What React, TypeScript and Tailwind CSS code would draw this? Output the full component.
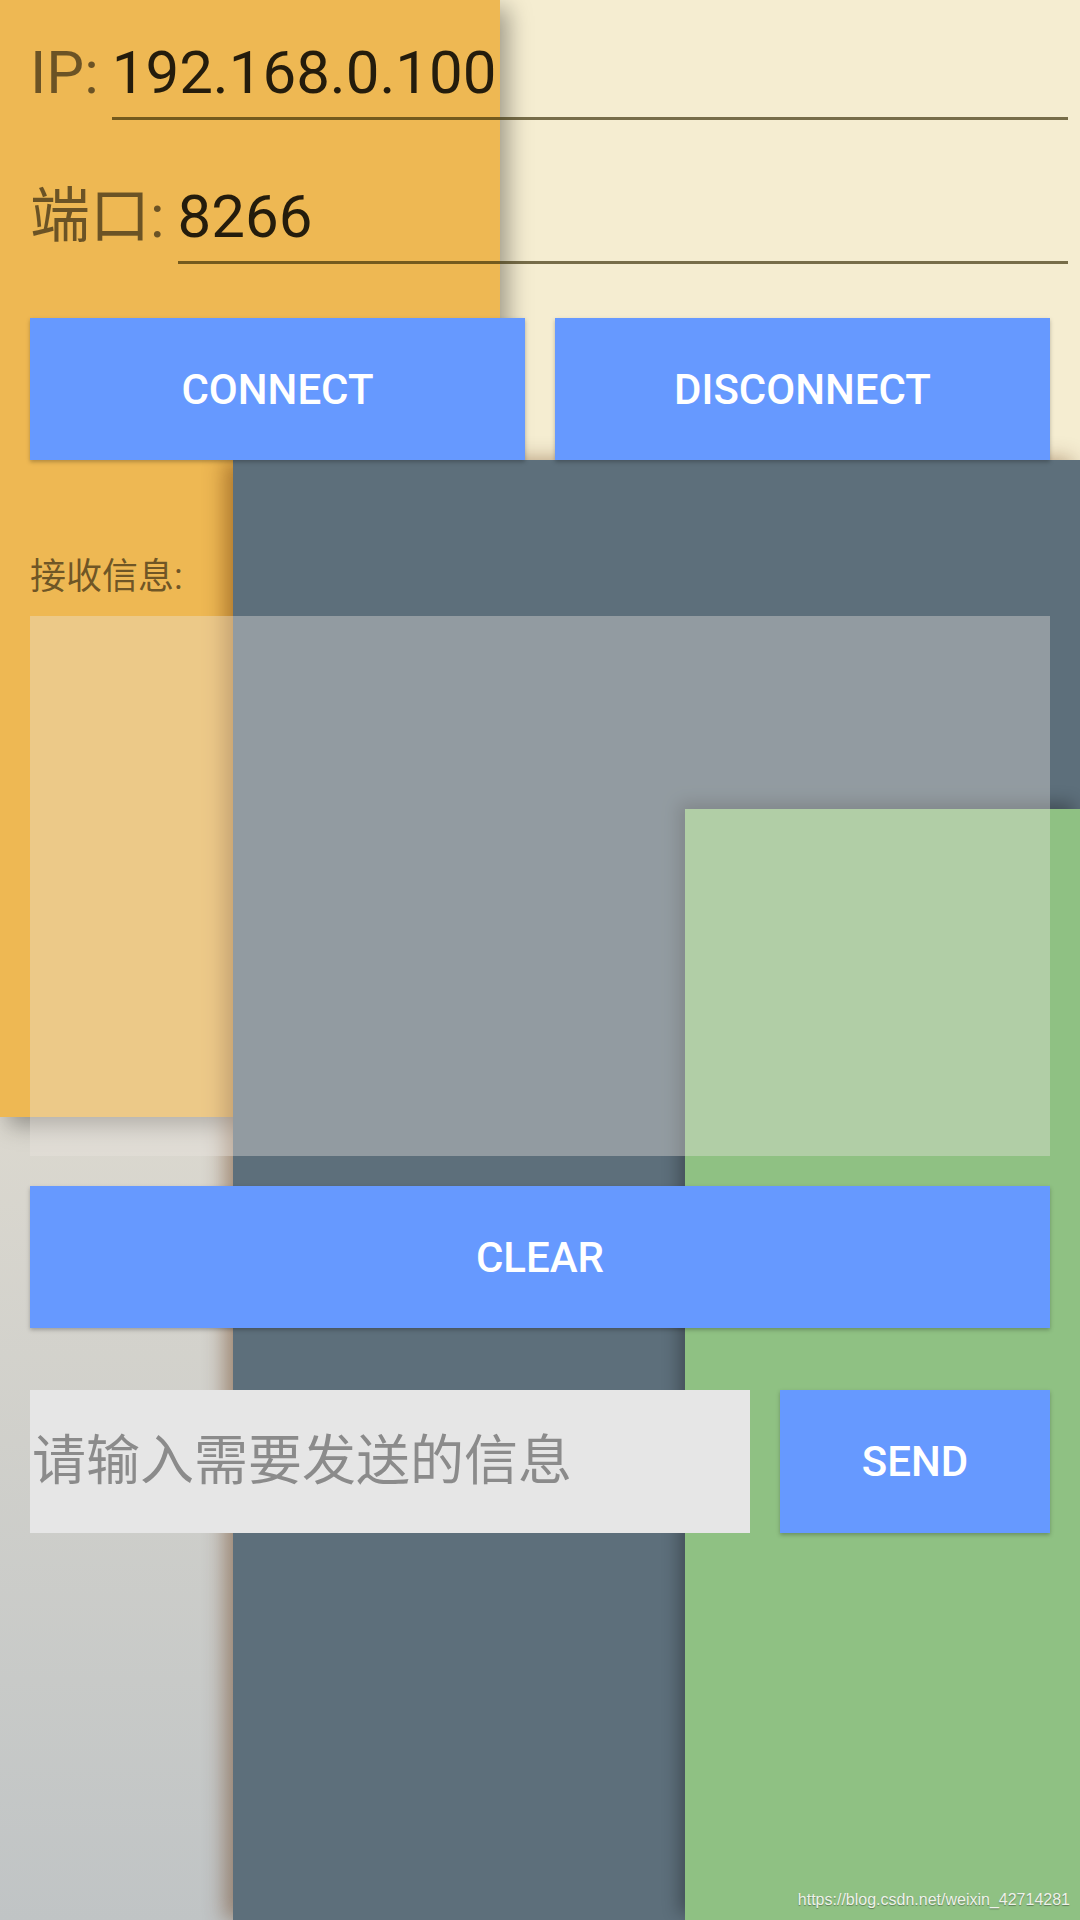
import type { ReactNode } from 'react';

function Backdrop() {
  return (
    <div className="col-start-1 row-start-1 grid grid-cols-[233px_267px_185px_395px] grid-rows-[460px_349px_308px_803px] bg-[#dad7ce]">
      {/* base gray, bottom left */}
      <div className="col-start-1 row-start-4 bg-gradient-to-b from-[#dbd8cf] to-[#c0c4c5]" />
      {/* cream, top right */}
      <div className="z-[1] col-span-2 col-start-3 row-start-1 bg-[#f5edd1]" />
      {/* yellow sheet */}
      <div className="z-[2] col-span-2 col-start-1 row-span-3 row-start-1 bg-[#eeb853] shadow-[8px_8px_22px_rgba(0,0,0,0.35)]" />
      {/* slate sheet */}
      <div className="z-[3] col-span-3 col-start-2 row-span-3 row-start-2 bg-[#5d6f7b] shadow-[-8px_0_20px_rgba(90,40,0,0.45)]" />
      {/* green sheet */}
      <div className="z-[4] col-start-4 row-span-2 row-start-3 bg-[#8fc183] shadow-[-6px_-6px_16px_rgba(0,0,0,0.3)]" />
    </div>
  );
}

function FlatButton({ children, className = '' }: { children: ReactNode; className?: string }) {
  return (
    <button
      className={`flex items-center justify-center bg-[#6699ff] text-[42px] font-medium text-white shadow-[0_2px_4px_rgba(0,0,0,0.25)] ${className}`}
    >
      {children}
    </button>
  );
}

function Field({ label, value, className = '' }: { label: string; value: string; className?: string }) {
  return (
    <div className={`flex items-baseline pr-[12px] ${className}`}>
      <span className="text-[60px] leading-[70px] text-black/55">{label}</span>
      <div className="ml-[13px] flex-1 border-b-[3px] border-[rgba(50,40,0,0.65)] pb-[9px] text-[60px] leading-[70px] text-black/85">
        {value}
      </div>
    </div>
  );
}

export default function App() {
  return (
    <div className="grid h-[1920px] w-[1080px] overflow-hidden font-[Roboto,'Noto_Sans_CJK_SC',sans-serif]">
      <Backdrop />

      <div className="z-10 col-start-1 row-start-1 flex flex-col pl-[30px]">
        <Field label="IP:" value="192.168.0.100" className="pt-[38px]" />
        <Field label="端口:" value="8266" className="mt-[62px]" />

        <div className="mt-[54px] grid grid-cols-2 gap-[30px] pr-[30px]">
          <FlatButton className="h-[142px]">CONNECT</FlatButton>
          <FlatButton className="h-[142px]">DISCONNECT</FlatButton>
        </div>

        <div className="mt-[96px] text-[36px] leading-[42px] text-black/55">接收信息:</div>

        {/* receive area, translucent over the sheets */}
        <div className="mr-[30px] mt-[18px] h-[540px] bg-[rgba(234,229,223,0.38)]" />

        <FlatButton className="mr-[30px] mt-[30px] h-[142px]">CLEAR</FlatButton>

        <div className="mt-[62px] flex h-[143px] gap-[30px] pr-[30px]">
          <div className="flex flex-1 items-center bg-[#e6e6e6] pl-[2px]">
            <input
              placeholder="请输入需要发送的信息"
              className="w-full bg-transparent text-[54px] leading-[64px] text-black/85 outline-none placeholder:text-[#8b8b8b]"
            />
          </div>
          <FlatButton className="w-[270px]">SEND</FlatButton>
        </div>

        <div className="mt-auto flex justify-end pb-[10px] pr-[10px]">
          <span className="font-['Liberation_Sans',Arial,sans-serif] text-[16px] leading-[20px] text-[#eef2ea] [text-shadow:0_1px_1px_rgba(0,0,0,0.35)]">
            https://blog.csdn.net/weixin_42714281
          </span>
        </div>
      </div>
    </div>
  );
}
